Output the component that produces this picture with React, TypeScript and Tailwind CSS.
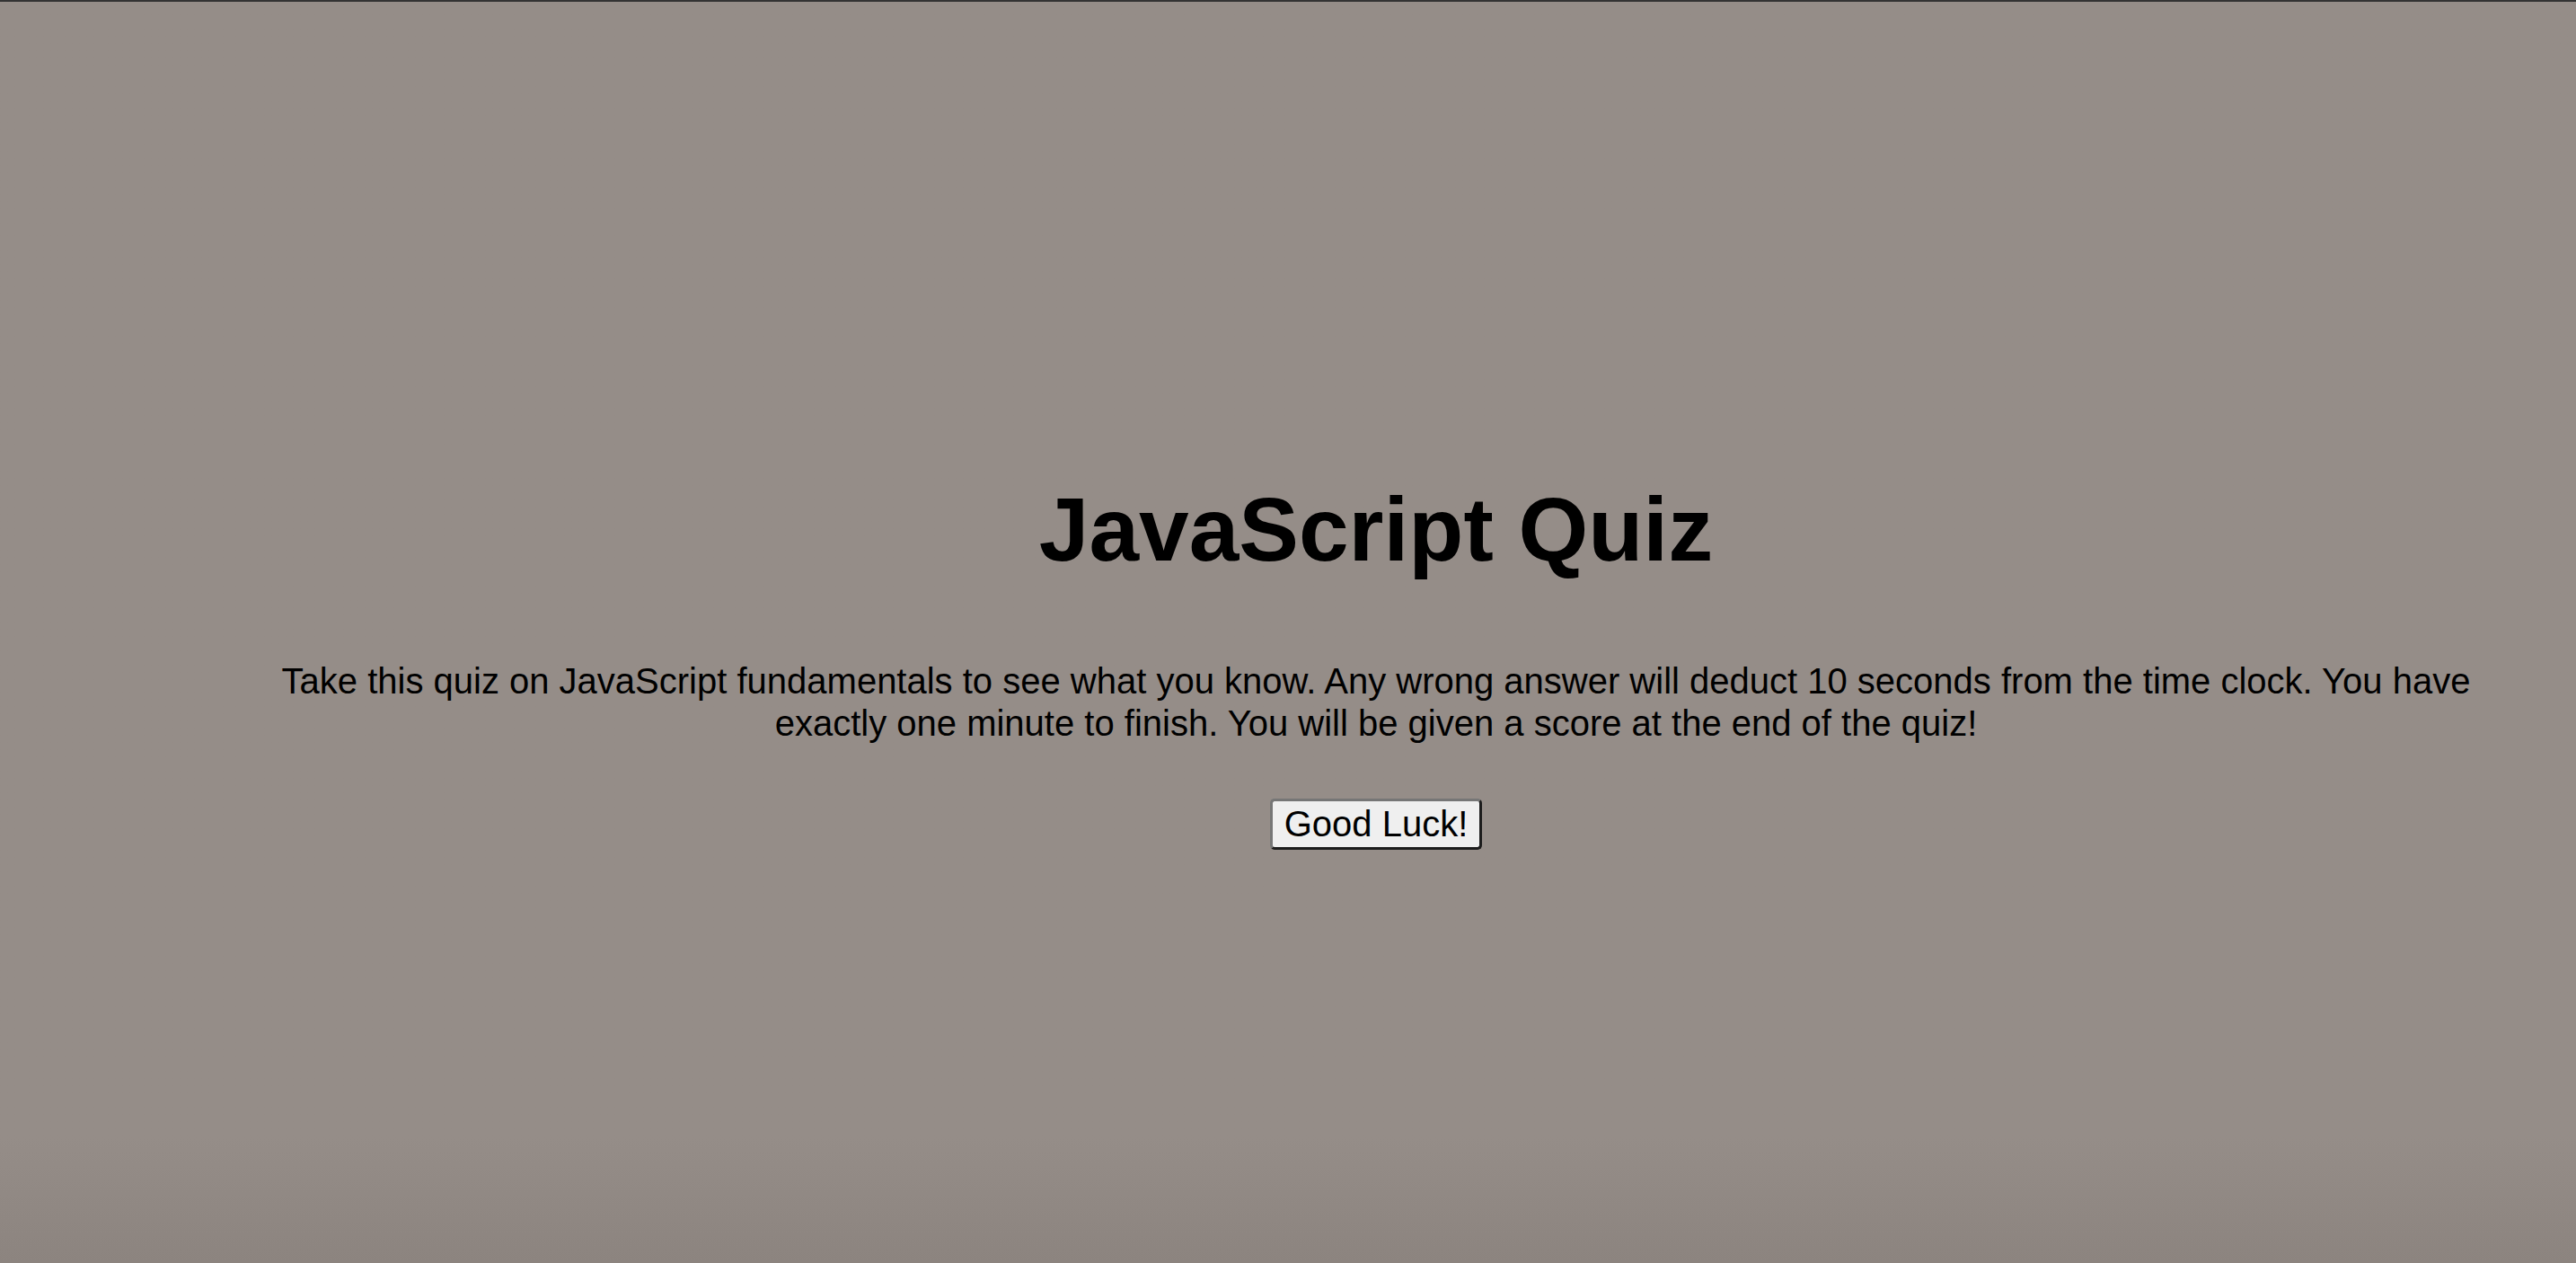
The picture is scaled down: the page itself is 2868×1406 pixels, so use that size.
export default function App() {
  return (
    <div
      className="h-[1406px] w-full border-t-2 border-[#333333] bg-linear-to-b from-[#958d88] from-90% to-[#8c847f] pl-[196px] text-black"
      style={{ fontFamily: '"Liberation Sans", Arial, sans-serif' }}
    >
      <div className="flex flex-col items-center">
        <h1 className="mt-[530px] text-[100px] font-bold leading-[115px]">JavaScript Quiz</h1>
        <p className="mx-auto mt-[88px] max-w-[2480px] text-center text-[40px] leading-[47px]">
          Take this quiz on JavaScript fundamentals to see what you know. Any wrong answer will deduct 10 seconds
          from the time clock. You have exactly one minute to finish. You will be given a score at the end of the quiz!
        </p>
        <button
          type="button"
          className="mt-[60px] rounded-[5px] border-[3px] border-t-[#767676] border-l-[#767676] border-r-[#1c1c1c] border-b-[#1c1c1c] bg-[#efefef] px-[13px] py-[2px] text-[40px] leading-[47px]"
        >
          Good Luck!
        </button>
      </div>
    </div>
  );
}
